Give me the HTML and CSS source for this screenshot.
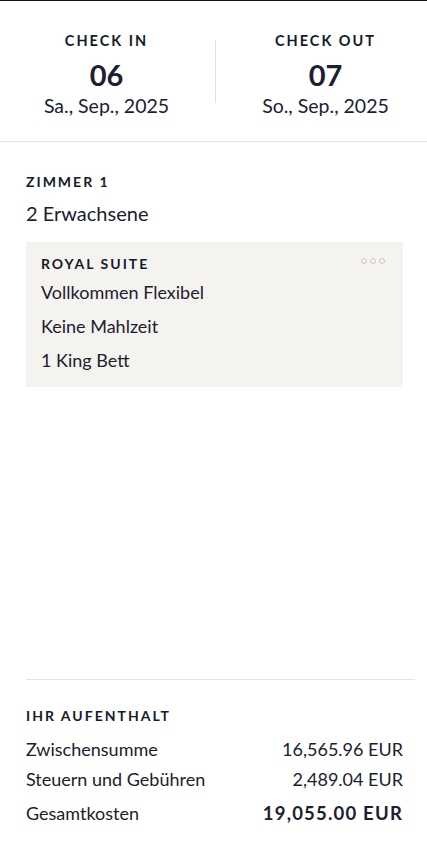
FILE: index.html
```html
<!DOCTYPE html>
<html lang="de">
<head>
  <meta charset="UTF-8" />
  <meta name="viewport" content="width=device-width, initial-scale=1.0"/>
  <title>Buchungsübersicht</title>
  <link rel="stylesheet" href="styles.css">
</head>
<body>
  <div class="summary">
    <div class="dates">
      <div class="date">
        <div class="label">Check in</div>
        <div class="day">06</div>
        <div class="full">Sa., Sep., 2025</div>
      </div>
      <div class="divider"></div>
      <div class="date date-out">
        <div class="label">Check out</div>
        <div class="day">07</div>
        <div class="full">So., Sep., 2025</div>
      </div>
    </div>

    <div class="room">
      <div class="label">Zimmer 1</div>
      <div class="guests">2 Erwachsene</div>

      <div class="room-card">
        <div class="room-head">
          <div class="label">Royal Suite</div>
          <div class="more">
            <span></span><span></span><span></span>
          </div>
        </div>
        <div class="room-line">Vollkommen Flexibel</div>
        <div class="room-line">Keine Mahlzeit</div>
        <div class="room-line">1 King Bett</div>
      </div>
    </div>

    <div class="stay">
      <div class="label">Ihr Aufenthalt</div>
      <div class="row">
        <span>Zwischensumme</span>
        <span>16,565.96 EUR</span>
      </div>
      <div class="row">
        <span>Steuern und Gebühren</span>
        <span>2,489.04 EUR</span>
      </div>
      <div class="row total">
        <span>Gesamtkosten</span>
        <span class="amount">19,055.00 EUR</span>
      </div>
    </div>
  </div>
</body>
</html>
```

FILE: styles.css
```css
body {
  margin: 0;
  font-family: "Lato", "Noto Sans", sans-serif;
  color: #1b2030;
  background: #fff;
}
.summary {
  box-sizing: border-box;
  border-top: 1px solid #0c1a1a;
  min-height: 100vh;
  display: flex;
  flex-direction: column;
}
.label {
  font-size: 14px;
  line-height: 18px;
  font-weight: 700;
  letter-spacing: 2px;
  text-transform: uppercase;
  color: #151b2a;
}

/* check in / check out */
.dates {
  display: grid;
  grid-template-columns: 213px 1px 1fr;
  column-gap: 2px;
  padding: 30px 0 23px;
  border-bottom: 1px solid #e2e2e2;
}
.date {
  display: flex;
  flex-direction: column;
  align-items: center;
}
.date .label {
  font-size: 14.5px;
  line-height: 20px;
}
.date-out {
  padding-left: 6px;
}
.divider {
  background: #e0e0e0;
  margin-top: 9px;
  height: 63px;
}
.day {
  font-size: 29px;
  line-height: 34px;
  font-weight: 700;
  margin-top: 7px;
}
.full {
  font-size: 19.5px;
  line-height: 24px;
  margin-top: 2px;
}

/* room */
.room {
  padding: 31px 24px 0 26px;
  flex: 1;
}
.guests {
  font-size: 20px;
  line-height: 26px;
  margin-top: 9px;
}
.room-card {
  background: #f5f3ef;
  margin-top: 16px;
  padding: 13px 18px 15px 15px;
}
.room-head {
  display: flex;
  justify-content: space-between;
  align-items: flex-start;
}
.more {
  display: flex;
  gap: 3px;
  margin-top: 3px;
}
.more span {
  box-sizing: border-box;
  width: 6px;
  height: 6px;
  border: 1px solid #cdc8c1;
  border-radius: 50%;
}
.room-line {
  font-size: 18px;
  line-height: 24px;
  margin-top: 10px;
}
.room-head + .room-line {
  margin-top: 7px;
}

/* totals */
.stay {
  margin: 0 12px 0 26px;
  border-top: 1px solid #e2e2e2;
  padding: 27px 12px 18px 0;
}
.row {
  display: flex;
  justify-content: space-between;
  align-items: baseline;
  font-size: 18px;
  line-height: 24px;
  margin-top: 6px;
}
.stay .label + .row {
  margin-top: 12px;
}
.row.total {
  margin-top: 10px;
}
.amount {
  font-size: 18.5px;
  font-weight: 700;
  letter-spacing: 1.2px;
}
```
